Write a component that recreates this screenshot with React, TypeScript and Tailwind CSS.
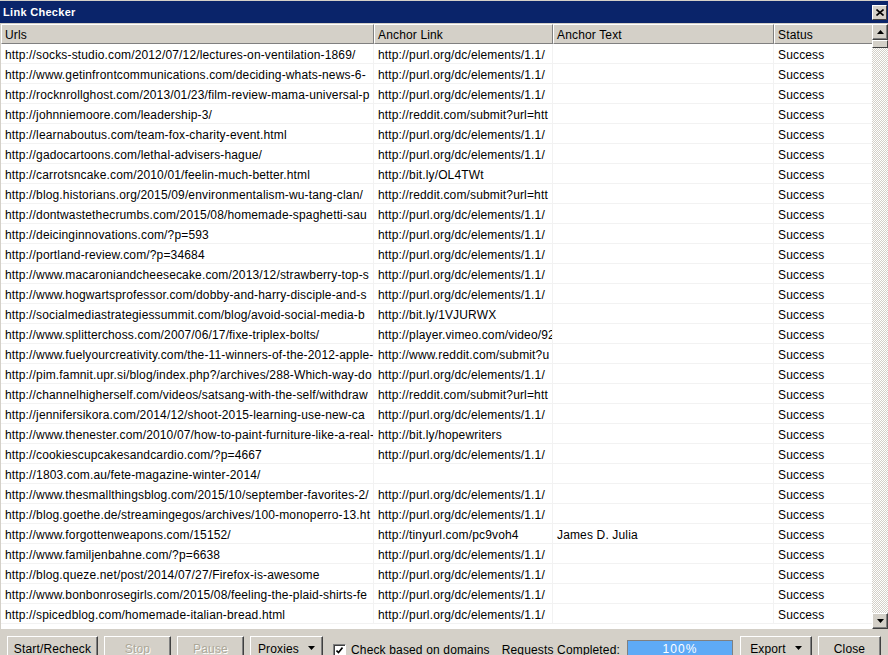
import React from "react";

type Row = { url: string; link: string; text?: string; status: string };

const PURL = "http://purl.org/dc/elements/1.1/";
const REDDIT = "http://reddit.com/submit?url=htt";

const rows: Row[] = [
  { url: "http://socks-studio.com/2012/07/12/lectures-on-ventilation-1869/", link: PURL, status: "Success" },
  { url: "http://www.getinfrontcommunications.com/deciding-whats-news-6-", link: PURL, status: "Success" },
  { url: "http://rocknrollghost.com/2013/01/23/film-review-mama-universal-p", link: PURL, status: "Success" },
  { url: "http://johnniemoore.com/leadership-3/", link: REDDIT, status: "Success" },
  { url: "http://learnaboutus.com/team-fox-charity-event.html", link: PURL, status: "Success" },
  { url: "http://gadocartoons.com/lethal-advisers-hague/", link: PURL, status: "Success" },
  { url: "http://carrotsncake.com/2010/01/feelin-much-better.html", link: "http://bit.ly/OL4TWt", status: "Success" },
  { url: "http://blog.historians.org/2015/09/environmentalism-wu-tang-clan/", link: REDDIT, status: "Success" },
  { url: "http://dontwastethecrumbs.com/2015/08/homemade-spaghetti-sau", link: PURL, status: "Success" },
  { url: "http://deicinginnovations.com/?p=593", link: PURL, status: "Success" },
  { url: "http://portland-review.com/?p=34684", link: PURL, status: "Success" },
  { url: "http://www.macaroniandcheesecake.com/2013/12/strawberry-top-s", link: PURL, status: "Success" },
  { url: "http://www.hogwartsprofessor.com/dobby-and-harry-disciple-and-s", link: PURL, status: "Success" },
  { url: "http://socialmediastrategiessummit.com/blog/avoid-social-media-b", link: "http://bit.ly/1VJURWX", status: "Success" },
  { url: "http://www.splitterchoss.com/2007/06/17/fixe-triplex-bolts/", link: "http://player.vimeo.com/video/92", status: "Success" },
  { url: "http://www.fuelyourcreativity.com/the-11-winners-of-the-2012-apple-", link: "http://www.reddit.com/submit?u", status: "Success" },
  { url: "http://pim.famnit.upr.si/blog/index.php?/archives/288-Which-way-do", link: PURL, status: "Success" },
  { url: "http://channelhigherself.com/videos/satsang-with-the-self/withdraw", link: REDDIT, status: "Success" },
  { url: "http://jennifersikora.com/2014/12/shoot-2015-learning-use-new-ca", link: PURL, status: "Success" },
  { url: "http://www.thenester.com/2010/07/how-to-paint-furniture-like-a-real-", link: "http://bit.ly/hopewriters", status: "Success" },
  { url: "http://cookiescupcakesandcardio.com/?p=4667", link: PURL, status: "Success" },
  { url: "http://1803.com.au/fete-magazine-winter-2014/", link: "", status: "Success" },
  { url: "http://www.thesmallthingsblog.com/2015/10/september-favorites-2/", link: PURL, status: "Success" },
  { url: "http://blog.goethe.de/streamingegos/archives/100-monoperro-13.ht", link: PURL, status: "Success" },
  { url: "http://www.forgottenweapons.com/15152/", link: "http://tinyurl.com/pc9voh4", text: "James D. Julia", status: "Success" },
  { url: "http://www.familjenbahne.com/?p=6638", link: PURL, status: "Success" },
  { url: "http://blog.queze.net/post/2014/07/27/Firefox-is-awesome", link: PURL, status: "Success" },
  { url: "http://www.bonbonrosegirls.com/2015/08/feeling-the-plaid-shirts-fe", link: PURL, status: "Success" },
  { url: "http://spicedblog.com/homemade-italian-bread.html", link: PURL, status: "Success" },
];

const cols = "grid grid-cols-[373px_179px_221px_99px]";

function HeaderCell({ label }: { label: string }) {
  return (
    <div className="h-[20px] pl-[3px] leading-[20px] border-t border-l border-white border-r border-r-[#808080] border-b border-b-[#808080] whitespace-nowrap overflow-hidden">
      {label}
    </div>
  );
}

function Cell({ children }: { children?: React.ReactNode }) {
  return (
    <div className="h-[20px] pl-[4px] leading-[22px] border-r border-b border-[#f2f2f2] whitespace-nowrap overflow-hidden">
      {children}
    </div>
  );
}

function Arrow({ down }: { down?: boolean }) {
  return (
    <svg width="7" height="4" viewBox="0 0 7 4">
      <path d={down ? "M0 0h7L3.5 4z" : "M0 4h7L3.5 0z"} fill="#000" />
    </svg>
  );
}

function ScrollButton({ down }: { down?: boolean }) {
  return (
    <div className="h-[16px] w-[16px] bg-[#d4d0c8] border-t border-l border-white border-r border-b border-r-[#404040] border-b-[#404040] shadow-[inset_-1px_-1px_#808080] flex items-center justify-center">
      <Arrow down={down} />
    </div>
  );
}

function Button({
  label,
  width,
  disabled,
  menu,
}: {
  label: string;
  width: string;
  disabled?: boolean;
  menu?: boolean;
}) {
  return (
    <div
      className={`${width} h-[26px] shrink-0 bg-[#d4d0c8] border-t border-l border-white border-r border-b border-r-[#404040] border-b-[#404040] shadow-[inset_-1px_-1px_#808080] flex items-start justify-center pt-[3px] gap-[9px] ${
        disabled ? "text-[#aca899] [text-shadow:1px_1px_#fff]" : "text-black"
      }`}
    >
      <span>{label}</span>
      {menu && (
        <span className="pt-[6px]">
          <Arrow down />
        </span>
      )}
    </div>
  );
}

export default function App() {
  return (
    <div className="w-[888px] h-[655px] overflow-hidden bg-[#d4d0c8] flex flex-col text-[12px] tracking-[0.15px] text-black font-['Liberation_Sans',Arial,sans-serif]">
      {/* title bar */}
      <div className="h-[23px] shrink-0 border-t border-[#d4d0c8] bg-[#0a246a] flex items-center justify-between pl-[3px] pr-[1px]">
        <span className="text-white font-bold text-[11px] tracking-[0.3px]">Link Checker</span>
        <div className="w-[15px] h-[15px] bg-[#d4d0c8] border-t border-l border-white border-r border-b border-r-[#404040] border-b-[#404040] flex items-center justify-center">
          <svg width="8" height="7" viewBox="0 0 8 7">
            <path d="M0.5 0.5l7 6M7.5 0.5l-7 6" stroke="#000" strokeWidth="1.6" />
          </svg>
        </div>
      </div>

      {/* results table */}
      <div className="h-[607px] shrink-0 border-t border-[#d4d0c8] border-l border-b border-[#7f9db9] bg-white flex">
        <div className="flex-1 overflow-hidden">
          <div className={`${cols} bg-[#d4d0c8]`}>
            <HeaderCell label="Urls" />
            <HeaderCell label="Anchor Link" />
            <HeaderCell label="Anchor Text" />
            <HeaderCell label="Status" />
          </div>
          {rows.map((r, i) => (
            <div key={i} className={cols}>
              <Cell>{r.url}</Cell>
              <Cell>{r.link}</Cell>
              <Cell>{r.text}</Cell>
              <Cell>{r.status}</Cell>
            </div>
          ))}
        </div>
        <div className="w-[16px] shrink-0 flex flex-col bg-[repeating-conic-gradient(#d4d0c8_0_25%,#ffffff_0_50%)] bg-[length:2px_2px]">
          <ScrollButton />
          <div className="h-[8px] bg-[#d4d0c8] border-t border-l border-white border-r border-b border-r-[#404040] border-b-[#404040]" />
          <div className="flex-1" />
          <ScrollButton down />
        </div>
      </div>

      {/* controls */}
      <div className="flex items-start pt-[6px] pl-[7px]">
        <Button label="Start/Recheck" width="w-[91px]" />
        <div className="w-[6px]" />
        <Button label="Stop" width="w-[67px]" disabled />
        <div className="w-[6px]" />
        <Button label="Pause" width="w-[67px]" disabled />
        <div className="w-[6px]" />
        <Button label="Proxies" width="w-[73px]" menu />
        <div className="flex items-center pt-[5px] pl-[10px]">
          <div className="w-[13px] h-[13px] bg-white border-t border-l border-[#808080] border-r border-b border-r-white border-b-white shadow-[inset_1px_1px_#404040] flex items-center justify-center">
            <svg width="7" height="7" viewBox="0 0 7 7">
              <path d="M0.5 3.5l2 2 4-5" stroke="#000" strokeWidth="1.6" fill="none" />
            </svg>
          </div>
          <span className="pl-[5px]">Check based on domains</span>
          <span className="pl-[12px]">Requests Completed:</span>
        </div>
        <div className="ml-[7px] mt-[4px] w-[106px] h-[20px] border border-[#808080] bg-[#5eaaf6] text-white text-center leading-[16px] tracking-[1px]">
          100%
        </div>
        <div className="w-[7px]" />
        <Button label="Export" width="w-[72px]" menu />
        <div className="w-[6px]" />
        <Button label="Close" width="w-[63px]" />
      </div>
    </div>
  );
}
